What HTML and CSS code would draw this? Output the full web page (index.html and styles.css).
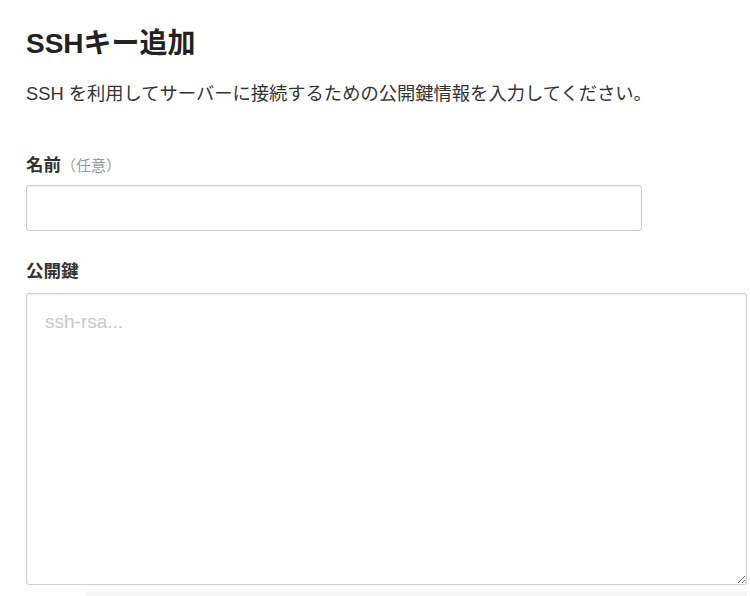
FILE: index.html
```html
<!DOCTYPE html>
<html lang="ja">
<head>
<meta charset="utf-8">
<title>SSHキー追加</title>
<link rel="stylesheet" href="styles.css">
</head>
<body>
<div class="page">
  <h1 class="title">SSHキー追加</h1>
  <p class="desc">SSH を利用してサーバーに接続するための公開鍵情報を入力してください。</p>
  <div class="field field-name">
    <label class="label" for="name">名前<span class="optional">（任意）</span></label>
    <input class="input" id="name" type="text">
  </div>
  <div class="field field-key">
    <label class="label" for="key">公開鍵</label>
    <textarea class="textarea" id="key" placeholder="ssh-rsa..."></textarea>
  </div>
  <div class="footer-shade"></div>
</div>
</body>
</html>
```

FILE: styles.css
```css
html, body {
  margin: 0;
  padding: 0;
  background: #fff;
}
body {
  font-family: "Liberation Sans", "Noto Sans CJK JP", sans-serif;
  color: #333;
  overflow: hidden;
}
.page {
  padding: 28px 3px 0 26px;
}
.title {
  margin: 0;
  font-size: 28px;
  line-height: 32px;
  font-weight: bold;
  color: #222;
}
.desc {
  margin: 22px 0 0;
  font-size: 18.3px;
  line-height: 24px;
  color: #333;
}
.field {
  display: flex;
  flex-direction: column;
  align-items: flex-start;
}
.field-name {
  margin-top: 48px;
}
.field-key {
  margin-top: 29px;
}
.label {
  font-size: 17.5px;
  line-height: 22px;
  font-weight: bold;
  color: #333;
}
.optional {
  font-size: 15px;
  font-weight: normal;
  color: #999;
}
.input, .textarea {
  box-sizing: border-box;
  border: 1px solid #cfcfcf;
  border-radius: 3px;
  box-shadow: inset 0 1px 2px rgba(0, 0, 0, 0.08);
  background: #fff;
  font-family: "Liberation Sans", "Noto Sans CJK JP", sans-serif;
  outline: none;
}
.input {
  margin-top: 8px;
  width: 616px;
  height: 46px;
  padding: 0 12px;
  font-size: 17px;
}
.textarea {
  margin-top: 11px;
  width: 721px;
  height: 292px;
  padding: 16px 18px;
  font-size: 19px;
  line-height: 24px;
  color: #333;
  resize: both;
}
.textarea::placeholder {
  color: #c9c9c9;
}
.footer-shade {
  height: 14px;
  margin-left: 60px;
  background: linear-gradient(to bottom, #fff, #f2f2f2);
}
```
